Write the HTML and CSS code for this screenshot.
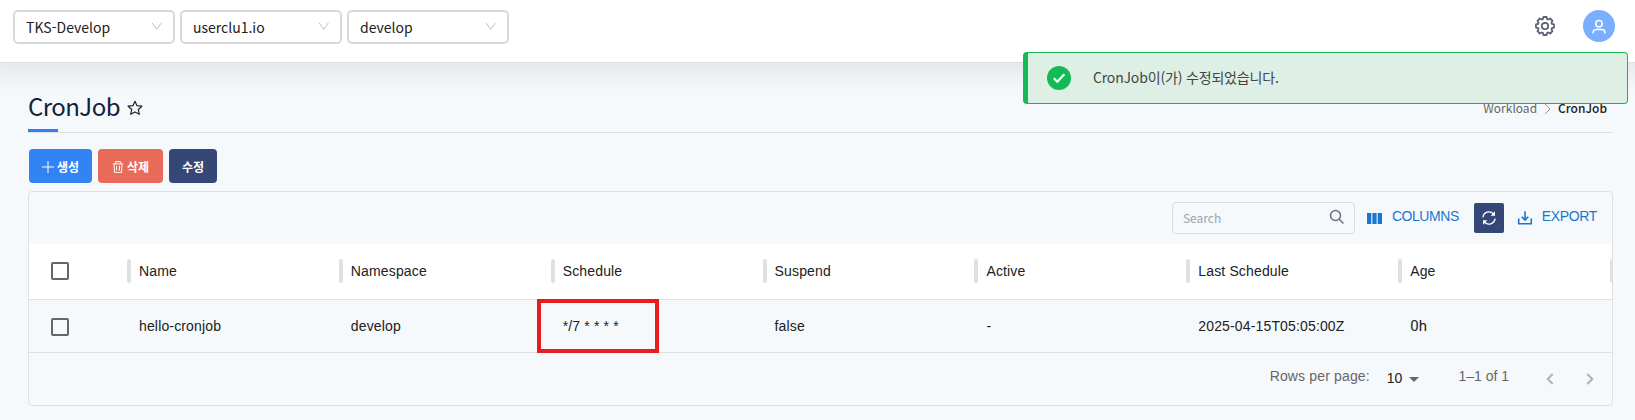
FILE: index.html
```html
<!DOCTYPE html>
<html lang="ko">
<head>
<meta charset="utf-8">
<title>CronJob</title>
<link rel="stylesheet" href="styles.css">
</head>
<body>
<header class="topbar">
  <div class="selects">
    <div class="select"><span>TKS-Develop</span><svg width="12" height="9" viewBox="0 0 12 9"><path d="M1 .8 5.700 7.400 10.400.8"/></svg></div>
    <div class="select"><span>userclu1.io</span><svg width="12" height="9" viewBox="0 0 12 9"><path d="M1 .8 5.700 7.400 10.400.8"/></svg></div>
    <div class="select"><span>develop</span><svg width="12" height="9" viewBox="0 0 12 9"><path d="M1 .8 5.700 7.400 10.400.8"/></svg></div>
  </div>
  <div class="account">
    <svg class="gear" width="22" height="22" viewBox="-11 -11 22 22"><path d="M-1.600-9H1.600L2.100-6.900 3.300-6.500 5.200-7.500 7.500-5.200 6.500-3.300 6.900-2.100 9-1.600V1.600L6.900 2.100 6.500 3.300 7.500 5.200 5.200 7.500 3.300 6.500 2.100 6.900 1.600 9H-1.600L-2.100 6.900-3.300 6.500-5.200 7.500-7.500 5.200-6.500 3.300-6.900 2.100-9 1.600V-1.600L-6.900-2.100-6.500-3.300-7.500-5.200-5.200-7.500-3.300-6.500-2.100-6.900z"/><circle r="3.200"/></svg>
    <div class="avatar"><svg width="16" height="16" viewBox="0 0 16 16"><circle cx="8" cy="4.700" r="3.200"/><path d="M2.100 14.400v-.6c0-2.200 1.700-3.200 3.500-3.200h4.800c1.800 0 3.500 1 3.500 3.200v.6"/></svg></div>
  </div>
</header>
<main class="page">
  <div class="titlebar">
    <h1 class="title">CronJob</h1>
    <svg class="star" width="16" height="16" viewBox="0 0 16 16"><path d="m8 1.300 2 4.400 4.900.5-3.600 3.300 1 4.800L8 11.900l-4.300 2.400 1-4.800L1.100 6.200 6 5.700z"/></svg>
    <nav class="crumbs"><span>Workload</span><svg width="7" height="12" viewBox="0 0 7 12"><path d="m1 1 5 5-5 5"/></svg><b>CronJob</b></nav>
  </div>
  <div class="actions">
    <button class="btn create"><svg width="12" height="12" viewBox="0 0 12 12"><path d="M6 0v12M0 6h12"/></svg>생성</button>
    <button class="btn delete"><svg width="12" height="12" viewBox="0 0 12 12"><path d="M.8 2.900h10.400M3.600 2.700V.6h4.800v2.100M2 3l.5 8.400h7L10 3M4.600 4.800v4.700M7.400 4.800v4.700"/></svg>삭제</button>
    <button class="btn edit">수정</button>
  </div>
  <section class="grid">
    <div class="toolbar">
      <div class="search"><span>Search</span><svg width="16" height="16" viewBox="0 0 16 16"><circle cx="6.500" cy="6.500" r="5"/><path d="m10.200 10.200 4.300 4.300"/></svg></div>
      <div class="tool columns"><svg width="15" height="11" viewBox="0 0 15 11"><path d="M0 0h4.300v11H0zM5.400 0h4.200v11H5.400zM10.700 0H15v11h-4.300z"/></svg>COLUMNS</div>
      <div class="refresh"><svg width="16" height="16" viewBox="0 0 16 16"><path d="M1.900 7.300A6.100 6.100 0 0 1 12.500 4M14.100 8.700A6.100 6.100 0 0 1 3.500 12"/><path class="tip" d="M14 1.200v4.600H9.600zM2 14.800v-4.600h4.400z"/></svg></div>
      <div class="tool export"><svg width="16" height="16" viewBox="0 0 16 16"><path d="M1.700 8.500v5.300h12.600V8.500M8 1.200v8.500M4.700 6.700 8 10l3.300-3.300"/></svg>EXPORT</div>
    </div>
    <div class="row head">
      <div class="check"><i></i></div>
      <div class="cell">Name</div><div class="cell">Namespace</div><div class="cell">Schedule</div><div class="cell">Suspend</div><div class="cell">Active</div><div class="cell">Last Schedule</div><div class="cell last">Age</div>
    </div>
    <div class="row data">
      <div class="check"><i></i></div>
      <div class="cell">hello-cronjob</div><div class="cell">develop</div><div class="cell marked">*/7 * * * *</div><div class="cell">false</div><div class="cell">-</div><div class="cell">2025-04-15T05:05:00Z</div><div class="cell age">0h</div>
    </div>
    <div class="pager">
      <span class="label">Rows per page:</span>
      <span class="size">10<svg width="10" height="5" viewBox="0 0 10 5"><path d="M0 0h10L5 5z"/></svg></span>
      <span class="range">1–1 of 1</span>
      <svg class="nav" width="8" height="12" viewBox="0 0 8 12"><path d="M6.700 1 1.700 6l5 5"/></svg>
      <svg class="nav" width="8" height="12" viewBox="0 0 8 12"><path d="m1.300 1 5 5-5 5"/></svg>
    </div>
  </section>
</main>
<div class="toast">
  <svg width="24" height="24" viewBox="0 0 24 24"><circle cx="12" cy="12" r="12"/><path d="m6.800 12.200 3.500 3.500 7-7.500"/></svg>
  <span>CronJob이(가) 수정되었습니다.</span>
</div>
</body>
</html>
```
FILE: styles.css
```css
*, *::before, *::after { box-sizing: border-box; }
body {
  margin: 0;
  height: 420px;
  overflow: hidden;
  background: #f5f9fc;
  color: #212121;
  font: 14px/20px "Liberation Sans", Arial, sans-serif;
}
svg { display: block; flex: none; fill: none; }
.topbar, .title, .crumbs, .btn, .search, .toast { font-family: "Noto Sans CJK KR", sans-serif; }

.topbar {
  position: relative;
  display: flex;
  justify-content: space-between;
  height: 62px;
  padding: 10px 20px 0 13px;
  background: #fff;
  box-shadow: 0 1px 0 #dcdedf, 0 0 24px 14px rgba(0, 0, 0, .07);
}
.selects { display: flex; gap: 5px; }
.select {
  display: flex;
  align-items: center;
  justify-content: space-between;
  width: 162px;
  height: 34px;
  padding: 0 10px 0 11px;
  border: 2px solid #d9d9d9;
  border-radius: 5px;
}
.select svg { stroke: #bfbfbf; margin-top: -1px; }
.account { display: flex; gap: 27px; height: 32px; align-items: center; }
.gear { stroke: #5b6076; stroke-width: 1.8; stroke-linejoin: round; }
.avatar {
  display: grid;
  place-items: center;
  width: 32px;
  height: 32px;
  border-radius: 50%;
  background: #7aafff;
}
.avatar svg { stroke: #fff; stroke-width: 1.5; margin-top: 2px; }

.page { padding: 0 22px 0 28px; }
.titlebar {
  display: flex;
  align-items: flex-start;
  height: 71px;
  padding-top: 27px;
  border-bottom: 1px solid #dcdee0;
}
.title {
  position: relative;
  align-self: stretch;
  margin: 0;
  font-size: 24px;
  font-weight: 400;
  line-height: 33px;
  letter-spacing: -.55px;
  color: #14203a;
}
.title::after { content: ""; display: block; width: 30px; height: 3px; margin-top: 7px; background: #2f80f7; }
.star { margin: 11px 0 0 7px; stroke: #222; stroke-width: 1.2; stroke-linejoin: round; }
.crumbs { display: flex; align-items: center; gap: 7px; margin: 9px 6px 0 auto; font-size: 12px; color: #666; }
.crumbs svg { stroke: #999; margin-top: 1px; }
.crumbs b { font-weight: 500; color: #222; }

.actions { display: flex; gap: 6px; padding: 16px 0 8px 1px; }
.btn {
  display: flex;
  align-items: center;
  justify-content: center;
  gap: 3px;
  height: 34px;
  padding: 0;
  border: 0;
  border-radius: 4px;
  color: #fff;
  font-size: 12px;
  font-weight: 700;
}
.btn svg { stroke: #fff; margin-top: 2px; }
.create { width: 63px; background: #3483f5; }
.delete { width: 65px; background: #e86b5a; }
.edit { width: 48px; background: #354777; }

.grid { height: 215px; border: 1px solid #e0e0e0; border-radius: 4px; }
.toolbar { display: flex; justify-content: flex-end; height: 52px; padding: 10px 15px 0 0; }
.search {
  display: flex;
  align-items: center;
  justify-content: space-between;
  width: 183px;
  height: 32px;
  padding: 0 9px 0 10px;
  border: 1px solid #dcdcdc;
  border-radius: 4px;
  font-size: 12px;
  color: #9da3a8;
}
.search svg { stroke: #6c7083; stroke-width: 1.5; margin-top: -2px; }
.tool { display: flex; align-items: center; height: 27px; color: #1976d2; letter-spacing: -.35px; }
.columns { gap: 10px; margin-left: 12px; letter-spacing: -.45px; }
.columns svg { fill: #1976d2; margin-top: 5px; }
.refresh {
  display: grid;
  place-items: center;
  width: 30px;
  height: 30px;
  margin: 1px 13px 0 15px;
  border-radius: 2px;
  background: #354777;
}
.refresh svg { stroke: #fff; stroke-width: 1.3; }
.refresh .tip { fill: #fff; stroke: none; }
.export { gap: 9px; }
.export svg { stroke: #1976d2; stroke-width: 1.6; margin-top: 5px; }

.row { display: grid; grid-template-columns: 100px repeat(7, 1fr); align-items: center; letter-spacing: .15px; }
.head { height: 56px; background: #fff; border-bottom: 1px solid #e0e0e0; padding-bottom: 1px; }
.data { height: 53px; border-bottom: 1px solid #e0e0e0; }
.check { padding-left: 22px; }
.data .check { padding-top: 1px; }
.check i { display: block; width: 18px; height: 18px; border: 2px solid #666; border-radius: 2px; }
.cell { position: relative; padding-left: 10px; }
.head .cell { line-height: 24px; }
.head .cell::before, .last::after {
  content: "";
  position: absolute;
  top: 0;
  left: -2px;
  width: 4px;
  height: 24px;
  border-radius: 2px;
  background: #e0e0e0;
}
.head .last::after { left: auto; right: 0; width: 2px; border-radius: 2px 0 0 2px; }
.age { font-family: Roboto, sans-serif; font-size: 15px; }
.marked::after {
  content: "";
  position: absolute;
  top: -17px;
  left: -16px;
  width: 122px;
  height: 54px;
  border: 4px solid #e81b1d;
}
.pager { display: flex; padding: 13px 18px 0 0; justify-content: flex-end; color: #666; height: 52px; }
.label { letter-spacing: .15px; }
.size { display: flex; align-items: center; gap: 7px; height: 24px; margin-left: 17px; color: #212121; }
.size svg { fill: #666; margin-top: 3px; }
.range { margin-left: 39px; }
.nav { margin: 7px 0 0 37px; stroke: #b0b3b5; stroke-width: 2; }
.nav + .nav { margin-left: 32px; }

.toast {
  position: absolute;
  top: 52px;
  left: 1023px;
  display: flex;
  align-items: center;
  gap: 22px;
  width: 605px;
  height: 52px;
  padding-left: 19px;
  border: 1px solid #14bb55;
  border-left-width: 5px;
  border-radius: 4px;
  background: #deefe5;
  color: #444;
}
.toast span { margin-top: -2px; letter-spacing: -.17px; }
.toast circle { fill: #14bb55; }
.toast path { stroke: #fff; stroke-width: 2.2; }
```
